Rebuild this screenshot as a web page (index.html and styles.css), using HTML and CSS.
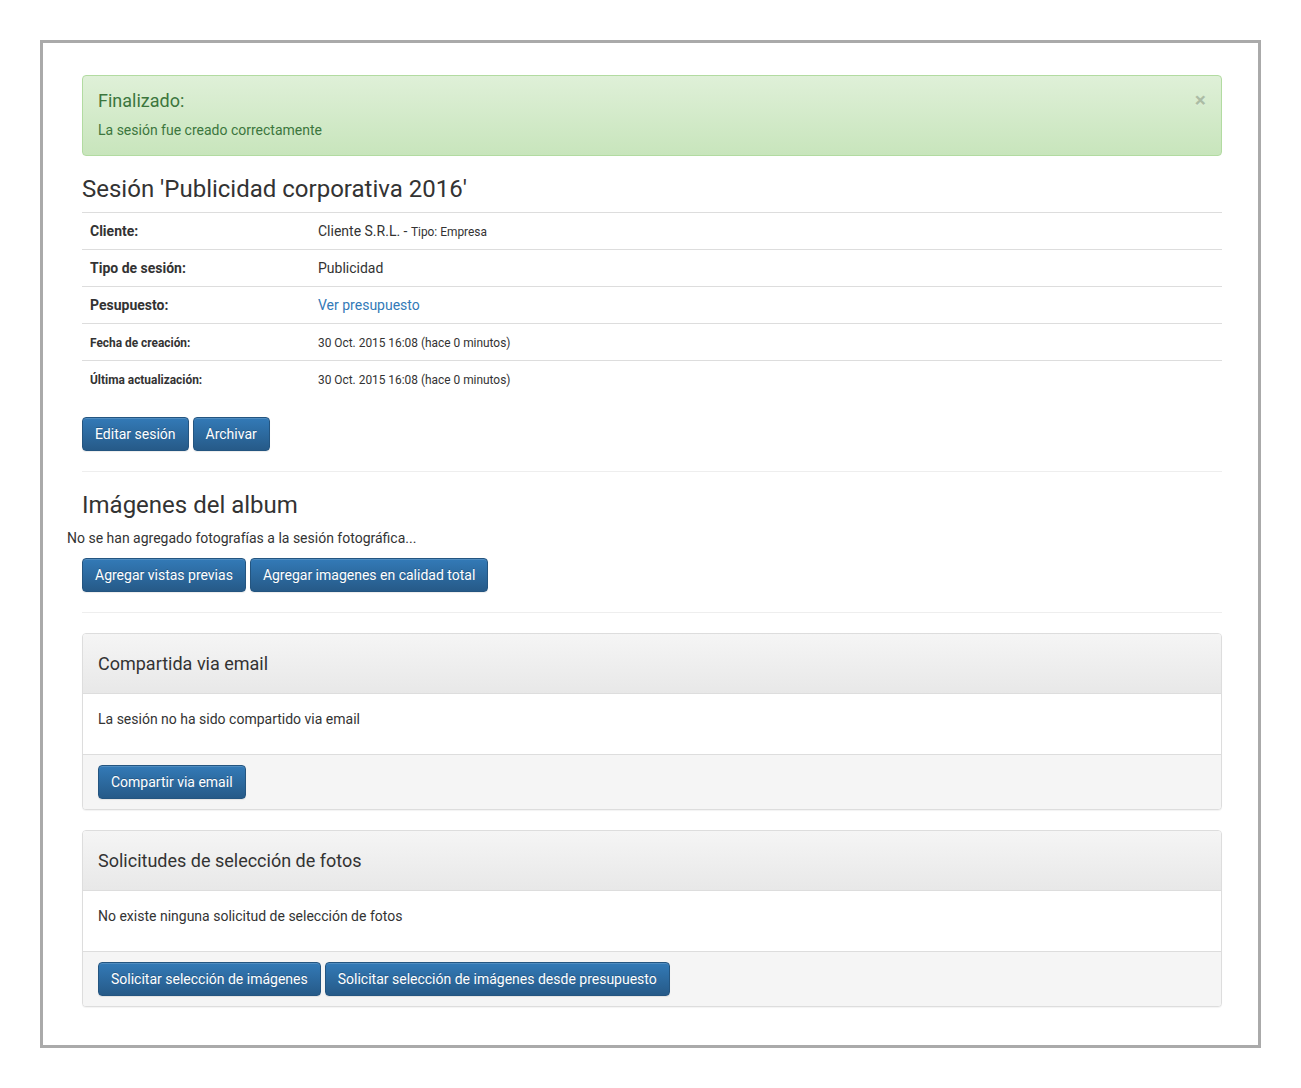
FILE: index.html
```html
<!DOCTYPE html>
<html lang="es">
<head>
<meta charset="utf-8">
<title>Sesión</title>
<link rel="stylesheet" href="styles.css">
</head>
<body>
<div class="frame">
  <div class="container">
    <div class="col">
      <div class="alert">
        <span class="close">&times;</span>
        <h4 class="alert-title">Finalizado:</h4>
        <p class="alert-text">La sesión fue creado correctamente</p>
      </div>
      <h3 class="h3">Sesión 'Publicidad corporativa 2016'</h3>
      <table class="table">
        <tr><th class="lab">Cliente:</th><td>Cliente S.R.L. - <small>Tipo: Empresa</small></td></tr>
        <tr><th class="lab">Tipo de sesión:</th><td>Publicidad</td></tr>
        <tr><th class="lab">Pesupuesto:</th><td><a class="link" href="#">Ver presupuesto</a></td></tr>
        <tr><th class="lab"><small>Fecha de creación:</small></th><td><small>30 Oct. 2015 16:08 (hace 0 minutos)</small></td></tr>
        <tr><th class="lab"><small>Última actualización:</small></th><td><small>30 Oct. 2015 16:08 (hace 0 minutos)</small></td></tr>
      </table>
      <div class="btns">
        <a class="btn" href="#">Editar sesión</a>
        <a class="btn" href="#">Archivar</a>
      </div>
      <hr class="hr">
      <h3 class="h3">Imágenes del album</h3>
    </div>
    <p class="plain">No se han agregado fotografías a la sesión fotográfica...</p>
    <div class="col">
      <div class="btns">
        <a class="btn" href="#">Agregar vistas previas</a>
        <a class="btn" href="#">Agregar imagenes en calidad total</a>
      </div>
      <hr class="hr">
      <div class="panel">
        <div class="panel-heading"><h4 class="panel-title">Compartida via email</h4></div>
        <div class="panel-body"><p class="ptext">La sesión no ha sido compartido via email</p></div>
        <div class="panel-footer"><a class="btn" href="#">Compartir via email</a></div>
      </div>
      <div class="panel">
        <div class="panel-heading"><h4 class="panel-title">Solicitudes de selección de fotos</h4></div>
        <div class="panel-body"><p class="ptext">No existe ninguna solicitud de selección de fotos</p></div>
        <div class="panel-footer btns">
          <a class="btn" href="#">Solicitar selección de imágenes</a>
          <a class="btn" href="#">Solicitar selección de imágenes desde presupuesto</a>
        </div>
      </div>
    </div>
  </div>
</div>
</body>
</html>
```
FILE: styles.css
```css
* { box-sizing: border-box; }
html, body { margin: 0; }
body {
  padding: 40px;
  background: #fff;
  font-family: Roboto, "Liberation Sans", sans-serif;
  font-size: 14px;
  line-height: 1.42857143;
  color: #333;
}
.frame {
  border: 3px solid #aaa;
  padding: 32px 21px 18px 24px;
  height: 1008px;
}
.container { width: 1170px; }
.col { padding: 0 15px; }
.alert {
  position: relative;
  padding: 15px 35px 15px 15px;
  margin-bottom: 20px;
  border: 1px solid #b2dba1;
  border-radius: 4px;
  color: #3c763d;
  background-image: linear-gradient(to bottom, #dff0d8 0, #c8e5bc 100%);
}
.alert-title {
  margin: 0 0 10px;
  font-size: 18px;
  line-height: 19px;
  font-weight: 400;
}
.alert-text { margin: 0; }
.close {
  position: absolute;
  top: 14px;
  right: 15px;
  font-size: 21px;
  font-weight: 700;
  line-height: 1;
  color: #000;
  opacity: .2;
  text-shadow: 0 1px 0 #fff;
}
.h3 {
  margin: 20px 0 10px;
  font-size: 24px;
  line-height: 26px;
  font-weight: 400;
  color: #333;
}
.table {
  width: 100%;
  border-collapse: collapse;
  border-spacing: 0;
  margin-bottom: 20px;
}
.table th, .table td {
  padding: 8px;
  border-top: 1px solid #ddd;
  text-align: left;
  vertical-align: top;
  line-height: 20px;
}
.table .lab { width: 20%; font-weight: 700; }
small { font-size: 85%; line-height: 1; }
.link { color: #337ab7; text-decoration: none; }
.btns { display: flex; gap: 4px; flex-wrap: wrap; }
.btn {
  display: inline-block;
  padding: 6px 12px;
  font-size: 14px;
  line-height: 20px;
  border: 1px solid #245580;
  border-radius: 4px;
  color: #fff;
  text-decoration: none;
  background-image: linear-gradient(to bottom, #337ab7 0, #265a88 100%);
  text-shadow: 0 -1px 0 rgba(0,0,0,.2);
  box-shadow: inset 0 1px 0 rgba(255,255,255,.15), 0 1px 1px rgba(0,0,0,.075);
}
.hr {
  margin: 20px 0;
  border: 0;
  border-top: 1px solid #eee;
  height: 0;
}
.plain { margin: 0 0 10px; line-height: 20px; }
.panel {
  margin-bottom: 20px;
  background: #fff;
  border: 1px solid #ddd;
  border-radius: 4px;
  box-shadow: 0 1px 1px rgba(0,0,0,.05);
  overflow: hidden;
}
.panel-heading {
  padding: 10px 15px;
  border-bottom: 1px solid #ddd;
  background-image: linear-gradient(to bottom, #f5f5f5 0, #e8e8e8 100%);
  color: #333;
}
.panel-title {
  margin: 10px 0;
  font-size: 18px;
  line-height: 19px;
  font-weight: 400;
}
.panel-body { padding: 15px; }
.ptext { margin: 0 0 10px; line-height: 20px; }
.panel-footer {
  padding: 10px 15px;
  background: #f5f5f5;
  border-top: 1px solid #ddd;
}
```
